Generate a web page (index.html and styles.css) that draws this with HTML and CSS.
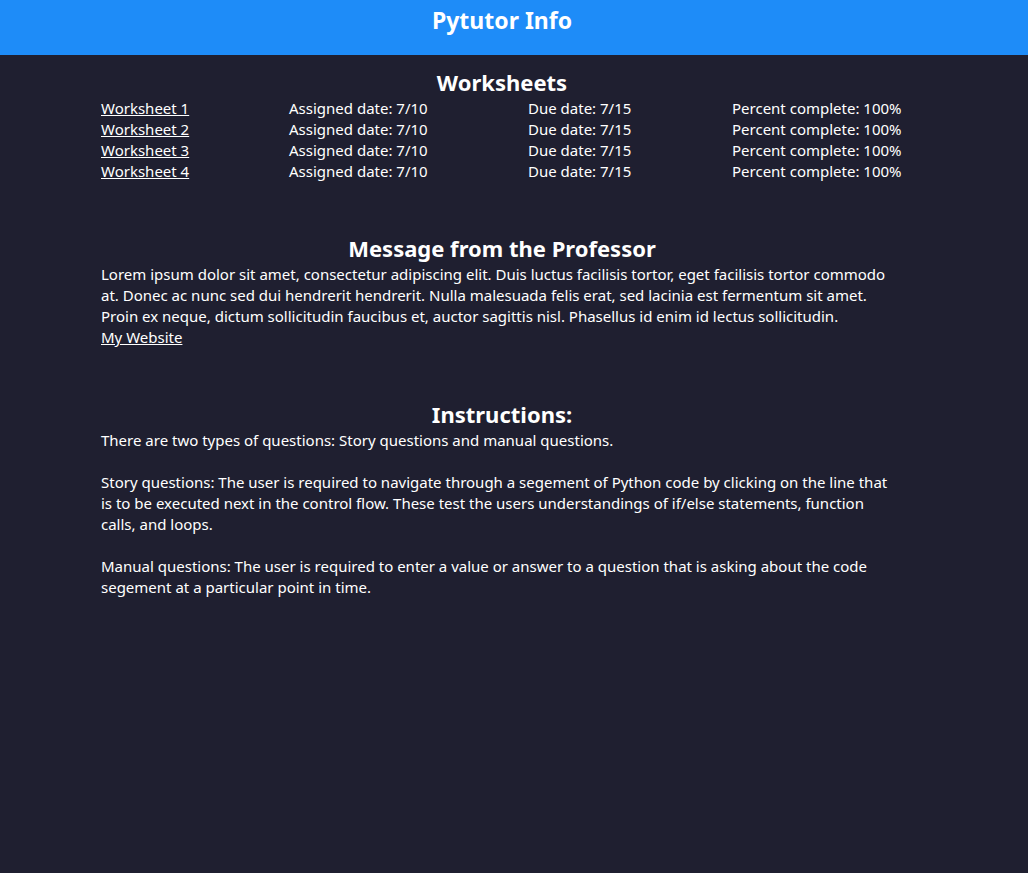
FILE: index.html
```html
<!DOCTYPE html>
<html lang="en">
<head>
<meta charset="utf-8">
<title>Pytutor Info</title>
<link rel="stylesheet" href="styles.css">
</head>
<body>
<header class="topbar">
  <div class="wrap"><h1 class="brand">Pytutor Info</h1></div>
</header>
<main class="wrap">
  <section class="section">
    <h2 class="heading">Worksheets</h2>
    <div class="ws-grid">
      <a href="#" class="link">Worksheet 1</a><span>Assigned date: 7/10</span><span>Due date: 7/15</span><span>Percent complete: 100%</span>
      <a href="#" class="link">Worksheet 2</a><span>Assigned date: 7/10</span><span>Due date: 7/15</span><span>Percent complete: 100%</span>
      <a href="#" class="link">Worksheet 3</a><span>Assigned date: 7/10</span><span>Due date: 7/15</span><span>Percent complete: 100%</span>
      <a href="#" class="link">Worksheet 4</a><span>Assigned date: 7/10</span><span>Due date: 7/15</span><span>Percent complete: 100%</span>
    </div>
  </section>
  <section class="section">
    <h2 class="heading">Message from the Professor</h2>
    <p class="text">Lorem ipsum dolor sit amet, consectetur adipiscing elit. Duis luctus facilisis tortor, eget facilisis tortor commodo at. Donec ac nunc sed dui hendrerit hendrerit. Nulla malesuada felis erat, sed lacinia est fermentum sit amet. Proin ex neque, dictum sollicitudin faucibus et, auctor sagittis nisl. Phasellus id enim id lectus sollicitudin.</p>
    <a href="#" class="link">My Website</a>
  </section>
  <section class="section">
    <h2 class="heading">Instructions:</h2>
    <p class="text">There are two types of questions: Story questions and manual questions.</p>
    <p class="text gap">Story questions: The user is required to navigate through a segement of Python code by clicking on the line that is to be executed next in the control flow. These test the users understandings of if/else statements, function calls, and loops.</p>
    <p class="text gap">Manual questions: The user is required to enter a value or answer to a question that is asking about the code segement at a particular point in time.</p>
  </section>
</main>
</body>
</html>
```
FILE: styles.css
```css
html, body {
  margin: 0;
  padding: 0;
}
body {
  background: #1f1f30;
  color: #ffffff;
  font-family: "Noto Sans", "Open Sans", sans-serif;
  font-size: 15px;
  line-height: 21px;
  min-height: 873px;
}
.wrap {
  width: 802px;
  margin-left: 101px;
}
.topbar {
  background: #1e8cf8;
  height: 55px;
}
.brand {
  margin: 0;
  text-align: center;
  font-size: 23px;
  font-weight: 700;
  line-height: 40px;
}
.section {
  display: flex;
  flex-direction: column;
  align-items: flex-start;
  margin-top: 50px;
}
.section:first-child {
  margin-top: 11px;
}
.heading {
  align-self: stretch;
  margin: 0;
  text-align: center;
  font-size: 22px;
  font-weight: 700;
  line-height: 32px;
}
.ws-grid {
  display: grid;
  grid-template-columns: 188px 239px 204px auto;
  align-self: stretch;
}
.link {
  color: #ffffff;
  text-decoration: underline;
}
.text {
  margin: 0;
  max-width: 795px;
}
.gap {
  margin-top: 21px;
}
```
